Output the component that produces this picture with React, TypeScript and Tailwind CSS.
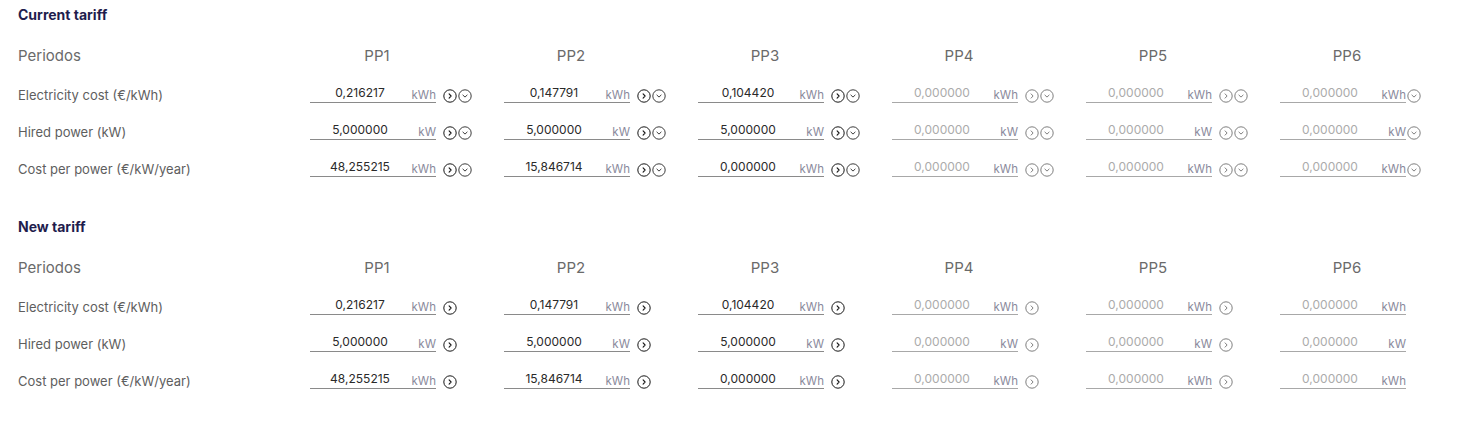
import React from 'react'

type Row = { label: string; unit: string; values: string[] }

const rows: Row[] = [
  { label: 'Electricity cost (€/kWh)', unit: 'kWh', values: ['0,216217', '0,147791', '0,104420', '0,000000', '0,000000', '0,000000'] },
  { label: 'Hired power (kW)', unit: 'kW', values: ['5,000000', '5,000000', '5,000000', '0,000000', '0,000000', '0,000000'] },
  { label: 'Cost per power (€/kW/year)', unit: 'kWh', values: ['48,255215', '15,846714', '0,000000', '0,000000', '0,000000', '0,000000'] },
]

const periods = ['PP1', 'PP2', 'PP3', 'PP4', 'PP5', 'PP6']

function ArrowRightCircle({ muted }: { muted: boolean }) {
  return (
    <svg width="14" height="14" viewBox="0 0 14 14" fill="none" className={muted ? 'text-[#707070]' : 'text-[#161616]'}>
      <circle cx="7" cy="7" r="6.2" stroke="currentColor" strokeWidth={muted ? 0.9 : 1} />
      <path d="M6.1 4.9 8.1 7 6.1 9.1" stroke="currentColor" strokeWidth={muted ? 0.9 : 1.1} strokeLinecap="round" strokeLinejoin="round" />
    </svg>
  )
}

function ArrowDownCircle({ muted }: { muted: boolean }) {
  return (
    <svg width="14" height="14" viewBox="0 0 14 14" fill="none" className={muted ? 'text-[#707070]' : 'text-[#262626]'}>
      <circle cx="7" cy="7" r="6.2" stroke="currentColor" strokeWidth={0.9} />
      <path d="M4.9 6.1 7 8.1 9.1 6.1" stroke="currentColor" strokeWidth={0.9} strokeLinecap="round" strokeLinejoin="round" />
    </svg>
  )
}

function Cell({ value, unit, index, expandable }: { value: string; unit: string; index: number; expandable: boolean }) {
  const muted = index >= 3
  const last = index === 5
  return (
    <div className="flex items-center">
      <div
        className={`w-[126px] h-[18px] mb-[4px] flex items-center border-b ${muted ? 'border-[#a8a8a8]' : 'border-[#8a8a8a]'}`}
      >
        <span className={`flex-1 text-center text-[12px] leading-[16px] ${muted ? 'text-[#ababab]' : 'text-[#2a2a2a]'}`}>
          {value}
        </span>
        <span className="w-[26px] text-right text-[11.5px] leading-[18px] text-[#8a8a9c] pt-[3px]">{unit}</span>
      </div>
      {!last && (
        <div className="ml-[7px]">
          <ArrowRightCircle muted={muted} />
        </div>
      )}
      {expandable && (
        <div className="ml-[1px]">
          <ArrowDownCircle muted={muted} />
        </div>
      )}
    </div>
  )
}

function Tariff({ title, expandable, newTariff }: { title: string; expandable: boolean; newTariff?: boolean }) {
  return (
    <section className={newTariff ? 'pt-[29px]' : 'pt-[5px]'}>
      <h2 className="text-[14px] leading-5 font-bold text-[#1f1d4d]">{title}</h2>
      <div className="grid grid-cols-[292px_repeat(6,194px)] mt-[11px]">
        <div className="h-[41px] flex items-center text-[15px] text-[#6a6a6a]">Periodos</div>
        {periods.map((p) => (
          <div key={p} className="h-[41px] flex items-center">
            <span className="w-[134px] text-center text-[15px] text-[#6a6a6a]">{p}</span>
          </div>
        ))}
        {rows.map((row) => (
          <React.Fragment key={row.label}>
            <div className="h-[37px] flex items-center text-[13px] text-[#5e5e5e]">{row.label}</div>
            {row.values.map((v, i) => (
              <div key={i} className="h-[37px] flex items-center">
                <Cell value={v} unit={row.unit} index={i} expandable={expandable} />
              </div>
            ))}
          </React.Fragment>
        ))}
      </div>
    </section>
  )
}

export default function App() {
  return (
    <div className="w-[1459px] h-[432px] bg-white pl-[18px] font-['Inter',sans-serif]">
      <Tariff title="Current tariff" expandable />
      <Tariff title="New tariff" expandable={false} newTariff />
    </div>
  )
}
